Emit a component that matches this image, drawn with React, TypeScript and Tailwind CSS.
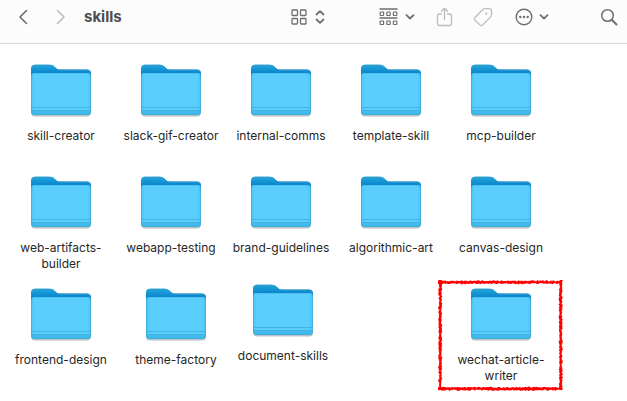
import type { ReactNode } from "react";

type Folder = { name: string; place?: string; marked?: boolean };

const folders: Folder[] = [
  { name: "skill-creator" },
  { name: "slack-gif-creator" },
  { name: "internal-comms" },
  { name: "template-skill" },
  { name: "mcp-builder" },
  { name: "web-artifacts-builder" },
  { name: "webapp-testing" },
  { name: "brand-guidelines" },
  { name: "algorithmic-art" },
  { name: "canvas-design" },
  { name: "frontend-design" },
  // These two were dragged slightly off the grid.
  { name: "theme-factory", place: "relative left-[5px]" },
  { name: "document-skills", place: "relative left-[2px] -top-1" },
  { name: "wechat-article-writer", place: "relative col-start-5", marked: true },
];

function FolderIcon() {
  return (
    <svg width="62" height="54" viewBox="0 0 62 54" aria-hidden="true" className="block">
      <defs>
        <linearGradient id="back" x1="0" y1="0" x2="0" y2="1">
          <stop offset="0" stopColor="#22a5dc" />
          <stop offset="0.22" stopColor="#0a86cc" />
          <stop offset="1" stopColor="#0a86cc" />
        </linearGradient>
        <linearGradient id="front" x1="0" y1="0" x2="1" y2="0">
          <stop offset="0" stopColor="#4cc3f5" />
          <stop offset="0.07" stopColor="#5acffe" />
          <stop offset="0.93" stopColor="#5acffe" />
          <stop offset="1" stopColor="#4cc3f5" />
        </linearGradient>
      </defs>
      <path d="M1 12h60v36.500q0 4-4 4H5q-4 0-4-4z" fill="#8c9ba3" opacity=".6" />
      <path d="M1 4.700q0-4 4-4h14.500c3 0 4 1 5.500 2.300C26.500 4.700 27.500 5.500 30 5.500h27q4 0 4 4v30H1z" fill="url(#back)" />
      <path d="M1.500 4.700q0-3.500 3.500-3.500h14.500c3 0 4 1 5.500 2.300C26.500 5.200 27.500 6 30 6h27q3 0 3.500 2.500" fill="none" stroke="#3a9cc8" strokeWidth=".8" />
      <path d="M1 12.500q0-3.500 3.500-3.500h53q3.500 0 3.500 3.500V47q0 4-4 4H5q-4 0-4-4z" fill="url(#front)" />
      <path d="M1.500 12q.5-2.500 3-2.500h53q2.500 0 3 2.500" fill="none" stroke="#4cc0f2" />
      <path d="M1 46h60v1q0 4-4 4H5q-4 0-4-4z" fill="#42b9ed" />
      <path d="M1 43.500h60M1 46.500h60" stroke="#43b3e4" />
      <path d="M1.500 11v36q0 3.500 3.500 3.500h52q3.500 0 3.500-3.500V11" fill="none" stroke="#3ba3d0" opacity=".6" />
    </svg>
  );
}

// Crayon line: a band whose two edges wander independently.
function crayon(length: number, seed: number): [number, number][] {
  let s = seed;
  const rand = () => {
    s = (s * 16807) % 2147483647;
    return s / 2147483647;
  };
  const outer: [number, number][] = [];
  const inner: [number, number][] = [];
  for (let i = 0; i <= length; i += 1) {
    outer.push([i, rand() * 1.6]);
    inner.unshift([i, 3 + rand() * 1.4]);
  }
  return [...outer, ...inner];
}

const points = (list: [number, number][]) =>
  list.map(([x, y]) => `${x.toFixed(1)},${y.toFixed(1)}`).join(" ");

function CrayonFrame() {
  const w = 125;
  const h = 111;
  return (
    <svg
      width={w}
      height={h}
      viewBox={`0 0 ${w} ${h}`}
      fill="#ff0000"
      aria-hidden="true"
      className="pointer-events-none absolute -left-2 -top-2"
    >
      <polygon points={points(crayon(w - 1, 7321))} />
      <polygon points={points(crayon(w - 1, 9133).map(([x, y]) => [x, h - y]))} />
      <polygon points={points(crayon(h - 1, 5517).map(([x, y]) => [y, x]))} />
      <polygon points={points(crayon(h - 1, 3391).map(([x, y]) => [w - y, x]))} />
    </svg>
  );
}

function ToolButton({ label, className, children }: { label: string; className: string; children: ReactNode }) {
  return (
    <button type="button" aria-label={label} className={`flex h-6 shrink-0 items-center ${className}`}>
      {children}
    </button>
  );
}

function ChevronDown() {
  return (
    <svg width="10" height="6" viewBox="0 0 10 6" fill="none" stroke="currentColor" strokeWidth="1.800" strokeLinecap="round" strokeLinejoin="round">
      <path d="M1.500 1.200 5 4.500l3.500-3.300" />
    </svg>
  );
}

export default function App() {
  return (
    <main className="min-h-screen bg-white font-['Inter','Liberation_Sans',sans-serif] text-[#262626]">
      <header className="flex h-11 items-center border-b border-[#d9d9d9] bg-[#fcfcfc] pb-[10px] pl-[18px] pr-[9px] text-[#6e6e6e]">
        <ToolButton label="Back" className="mr-7">
          <svg width="10" height="16" viewBox="0 0 10 16" fill="none" stroke="currentColor" strokeWidth="1.600" strokeLinecap="round" strokeLinejoin="round">
            <path d="M8.500 1.500 2 8l6.500 6.500" />
          </svg>
        </ToolButton>
        <ToolButton label="Forward" className="text-[#bcbcbc]">
          <svg width="10" height="16" viewBox="0 0 10 16" fill="none" stroke="currentColor" strokeWidth="1.600" strokeLinecap="round" strokeLinejoin="round">
            <path d="M1.500 1.500 8 8l-6.500 6.500" />
          </svg>
        </ToolButton>
        <h1 className="ml-[18px] text-[15px] font-bold leading-5 text-[#4d4d4d]">skills</h1>
        <div className="ml-auto flex items-center">
          <ToolButton label="View as icons" className="mr-[54px] gap-2">
            <svg width="16" height="16" viewBox="0 0 16 16" fill="none" stroke="currentColor" strokeWidth="1.300">
              <rect x="1" y="1" width="5.500" height="5.500" rx=".8" />
              <rect x="9.500" y="1" width="5.500" height="5.500" rx=".8" />
              <rect x="1" y="9.500" width="5.500" height="5.500" rx=".8" />
              <rect x="9.500" y="9.500" width="5.500" height="5.500" rx=".8" />
            </svg>
            <svg width="10" height="16" viewBox="0 0 10 16" fill="none" stroke="currentColor" strokeWidth="1.800" strokeLinecap="round" strokeLinejoin="round">
              <path d="M1.500 5.500 5 2.200l3.500 3.300M1.500 10.500 5 13.800l3.500-3.300" />
            </svg>
          </ToolButton>
          <ToolButton label="Group items" className="mr-[21px] gap-[7px]">
            <svg width="19" height="18" viewBox="0 0 19 18" fill="none" stroke="currentColor" strokeWidth="1.200">
              <path d="M.5 1h18M.5 10h18" strokeWidth="1.300" />
              <rect x="1.200" y="4" width="3.400" height="3.500" rx=".5" />
              <rect x="7.800" y="4" width="3.400" height="3.500" rx=".5" />
              <rect x="14.400" y="4" width="3.400" height="3.500" rx=".5" />
              <rect x="1.200" y="13" width="3.400" height="3.500" rx=".5" />
              <rect x="7.800" y="13" width="3.400" height="3.500" rx=".5" />
              <rect x="14.400" y="13" width="3.400" height="3.500" rx=".5" />
            </svg>
            <ChevronDown />
          </ToolButton>
          <ToolButton label="Share" className="mr-5 text-[#bcbcbc]">
            <svg width="17" height="20" viewBox="0 0 17 20" fill="none" stroke="currentColor" strokeWidth="1.300" strokeLinecap="round" strokeLinejoin="round">
              <path d="M5.500 7H3.200C2 7 1.500 7.500 1.500 8.700v8.100c0 1.200.5 1.700 1.700 1.700h10.600c1.200 0 1.700-.5 1.700-1.700V8.700c0-1.200-.5-1.700-1.700-1.700h-2.300M8.500 12.500V1.300M5.500 4.200l3-3 3 3" />
            </svg>
          </ToolButton>
          <ToolButton label="Tags" className="mr-[22px] text-[#bcbcbc]">
            <svg width="20" height="20" viewBox="0 0 20 20" fill="none" stroke="currentColor" strokeWidth="1.300" strokeLinejoin="round">
              <path d="M1.700 10.800 9.600 2.700c.7-.7 1.300-1 2.300-1h3.700c2 0 2.900.9 2.900 2.800v3.200c0 1-.3 1.700-1 2.400l-8.100 8c-.8.800-1.500.8-2.300 0l-5.400-5.200c-.7-.7-.7-1.400 0-2.100z" />
              <circle cx="13.300" cy="6.700" r="1.100" fill="currentColor" stroke="none" />
            </svg>
          </ToolButton>
          <ToolButton label="More actions" className="mr-[51px] gap-[6px]">
            <svg width="18" height="18" viewBox="0 0 18 18" fill="none" stroke="currentColor" strokeWidth="1.400">
              <circle cx="9" cy="9" r="7.800" />
              <g fill="currentColor" stroke="none">
                <circle cx="5.300" cy="9" r="1.200" />
                <circle cx="9" cy="9" r="1.200" />
                <circle cx="12.700" cy="9" r="1.200" />
              </g>
            </svg>
            <ChevronDown />
          </ToolButton>
          <ToolButton label="Search" className="">
            <svg width="18" height="18" viewBox="0 0 18 18" fill="none" stroke="currentColor" strokeLinecap="round">
              <circle cx="7.500" cy="7.500" r="5.800" strokeWidth="1.500" />
              <path d="m12 12 4.500 4.500" strokeWidth="2" />
            </svg>
          </ToolButton>
        </div>
      </header>

      <ul className="grid auto-rows-[112px] grid-cols-[repeat(auto-fill,110px)] pl-[6px] pt-5">
        {folders.map(({ name, place, marked }) => (
          <li key={name} className={`flex flex-col items-center ${place ?? ""}`}>
            <FolderIcon />
            <span className="mt-[10px] w-[100px] text-center text-[12px] leading-4">{name}</span>
            {marked && <CrayonFrame />}
          </li>
        ))}
      </ul>
    </main>
  );
}
